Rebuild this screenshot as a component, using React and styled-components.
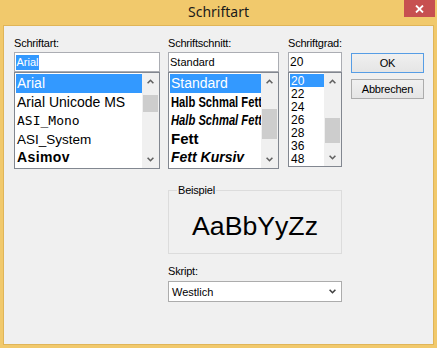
import React from 'react';
import styled, { createGlobalStyle } from 'styled-components';

const GlobalStyle = createGlobalStyle`
  html, body { margin: 0; padding: 0; }
  body { width: 437px; height: 348px; overflow: hidden; background: #f1c96c; font-family: "Liberation Sans", Arial, sans-serif; }
  * { box-sizing: border-box; }
`;

const Window = styled.div`
  width: 437px;
  height: 348px;
  background: #f1c96c;
  display: flex;
  flex-direction: column;
  padding: 0 3px 3px;
`;

const TitleBar = styled.div`
  flex: none;
  height: 25px;
  margin: 0 -3px;
  display: grid;
  grid-template-columns: 1fr auto 1fr;
  align-items: start;
`;

const Title = styled.div`
  grid-column: 2;
  padding-top: 2px;
  font-family: "Noto Sans", "Open Sans", sans-serif;
  font-size: 14px;
  line-height: 19px;
  color: #1a1a1a;
`;

const CloseButton = styled.div`
  grid-column: 3;
  justify-self: end;
  width: 31px;
  height: 17px;
  margin-right: 2px;
  background: #c75050;
  display: flex;
  align-items: center;
  justify-content: center;
`;

const Client = styled.div`
  flex: 1;
  background: #f0f0f0;
  border: 1px solid #e0b558;
  padding: 11px 0 0 10px;
`;

const Body = styled.div`
  display: grid;
  grid-template-columns: 154px 120px 63px 73px;
  align-items: start;
`;

const Column = styled.div`
  width: ${(p) => p.$w}px;
  display: flex;
  flex-direction: column;
`;

const Label = styled.div`
  font-size: 11px;
  line-height: 13px;
  height: 15px;
  letter-spacing: -0.2px;
  color: #000;
  white-space: nowrap;
`;

const Edit = styled.div`
  height: 20px;
  border: 1px solid #abadb3;
  background: #fff;
  font-size: ${(p) => p.$size || 11}px;
  line-height: 18px;
  padding: 0 1px;
  color: #000;
`;

const Selected = styled.span`
  background: #3399ff;
  color: #fff;
  display: inline-block;
  line-height: 15px;
  padding: 0 0.5px;
`;

const ListBox = styled.div`
  height: ${(p) => p.$h}px;
  border: 1px solid #828790;
  background: #fff;
  display: flex;
  overflow: hidden;
`;

const Items = styled.div`
  flex: 1;
  min-width: 0;
  padding: 1px 0 0 1px;
  overflow: hidden;
`;

const Item = styled.div`
  height: ${(p) => p.$h}px;
  line-height: ${(p) => p.$h}px;
  padding-left: 1px;
  white-space: nowrap;
  overflow: hidden;
  font-family: "Liberation Sans", Arial, sans-serif;
  font-size: 14px;
  background: ${(p) => (p.$active ? '#3399ff' : 'transparent')};
  color: ${(p) => (p.$active ? '#fff' : '#000')};
`;

const ItemText = styled.span`
  display: inline-block;
  font-family: ${(p) => p.$family || 'inherit'};
  font-size: ${(p) => p.$size || 14}px;
  font-weight: ${(p) => (p.$bold ? 700 : 400)};
  font-style: ${(p) => (p.$italic ? 'italic' : 'normal')};
  letter-spacing: ${(p) => p.$ls || 0}px;
  transform: scaleX(${(p) => p.$scale || 1});
  transform-origin: left center;
`;

const Scrollbar = styled.div`
  width: 17px;
  flex: none;
  display: flex;
  flex-direction: column;
  background: #f0f0f0;
`;

const ScrollButton = styled.div`
  height: 17px;
  flex: none;
  display: flex;
  align-items: center;
  justify-content: center;
`;

const Track = styled.div`
  flex: 1;
`;

const Thumb = styled.div`
  margin: ${(p) => p.$top}px 1px 0;
  height: ${(p) => p.$h}px;
  background: #cdcdcd;
`;

const ButtonColumn = styled.div`
  margin-top: 16px;
  display: flex;
  flex-direction: column;
  gap: 6px;
`;

const Button = styled.button`
  width: 73px;
  height: 20px;
  padding: 0;
  font-family: "Liberation Sans", Arial, sans-serif;
  font-size: 11px;
  letter-spacing: -0.2px;
  color: #000;
  border: 1px solid ${(p) => (p.$default ? '#569de5' : '#acacac')};
  background: linear-gradient(#f0f0f0, #e5e5e5);
`;

const Lower = styled.div`
  grid-column: 2 / 4;
  width: 174px;
  display: flex;
  flex-direction: column;
`;

const SampleBox = styled.fieldset`
  margin: 15px 0 0;
  padding: 14px 0 12px;
  border: 1px solid #dcdcdc;
  min-width: 0;
`;

const Legend = styled.legend`
  margin-left: 8px;
  padding: 0 1px;
  font-size: 11px;
  line-height: 13px;
  letter-spacing: -0.2px;
  color: #000;
  text-align: left;
`;

const SampleText = styled.div`
  font-size: 26.67px;
  line-height: 30px;
  color: #000;
  text-align: center;
`;

const ScriptLabel = styled(Label)`
  margin-top: 11px;
`;

const Select = styled.div`
  margin-top: 1px;
  height: 21px;
  border: 1px solid #acacac;
  background: #fff;
  display: flex;
  align-items: center;
  justify-content: space-between;
  padding: 0 5px 0 3px;
  font-size: 11px;
  color: #000;
`;

const Chevron = ({ down, color = '#606060' }) => (
  <svg width="7" height="5" viewBox="0 0 7 5">
    <path
      d={down ? 'M0.6 0.8 L3.5 3.7 L6.4 0.8' : 'M0.6 4.2 L3.5 1.3 L6.4 4.2'}
      fill="none"
      stroke={color}
      strokeWidth="1.6"
    />
  </svg>
);

const ScrollList = ({ height, thumbTop, thumbHeight, children }) => (
  <ListBox $h={height}>
    <Items>{children}</Items>
    <Scrollbar>
      <ScrollButton>
        <Chevron />
      </ScrollButton>
      <Track>
        <Thumb $top={thumbTop} $h={thumbHeight} />
      </Track>
      <ScrollButton>
        <Chevron down />
      </ScrollButton>
    </Scrollbar>
  </ListBox>
);

const fonts = [
  { name: 'Arial' },
  { name: 'Arial Unicode MS' },
  { name: 'ASI_Mono', family: '"DejaVu Sans Mono", monospace', size: 13 },
  { name: 'ASI_System', size: 13.5 },
  { name: 'Asimov', bold: true, ls: 0.4 },
];

const styles = [
  { name: 'Standard' },
  { name: 'Halb Schmal Fett', bold: true, size: 14, scale: 0.8 },
  { name: 'Halb Schmal Fett', bold: true, italic: true, size: 14, scale: 0.8 },
  { name: 'Fett', bold: true, size: 15 },
  { name: 'Fett Kursiv', bold: true, italic: true, size: 14 },
];

const sizes = ['20', '22', '24', '26', '28', '36', '48'];

export default function App() {
  return (
    <>
      <GlobalStyle />
      <Window>
        <TitleBar>
          <Title>Schriftart</Title>
          <CloseButton>
            <svg width="9" height="8" viewBox="0 0 9 8">
              <path d="M1 0.5 L8 7.5 M8 0.5 L1 7.5" stroke="#fff" strokeWidth="1.8" />
            </svg>
          </CloseButton>
        </TitleBar>
        <Client>
          <Body>
            <Column $w={146}>
              <Label>Schriftart:</Label>
              <Edit>
                <Selected>Arial</Selected>
              </Edit>
              <ScrollList height={97} thumbTop={5} thumbHeight={17}>
                {fonts.map((f, i) => (
                  <Item key={f.name} $h={18.5} $active={i === 0}>
                    <ItemText $family={f.family} $size={f.size} $bold={f.bold} $ls={f.ls}>
                      {f.name}
                    </ItemText>
                  </Item>
                ))}
              </ScrollList>
            </Column>
            <Column $w={111}>
              <Label>Schriftschnitt:</Label>
              <Edit>Standard</Edit>
              <ScrollList height={97} thumbTop={19} thumbHeight={30}>
                {styles.map((s, i) => (
                  <Item key={i} $h={18.5} $active={i === 0}>
                    <ItemText
                      $size={s.size}
                      $bold={s.bold}
                      $italic={s.italic}
                      $scale={s.scale}
                    >
                      {s.name}
                    </ItemText>
                  </Item>
                ))}
              </ScrollList>
            </Column>
            <Column $w={54}>
              <Label>Schriftgrad:</Label>
              <Edit $size={12}>20</Edit>
              <ScrollList height={95} thumbTop={28} thumbHeight={25}>
                {sizes.map((s, i) => (
                  <Item key={s} $h={13} $active={i === 0}>
                    <ItemText $size={12}>{s}</ItemText>
                  </Item>
                ))}
              </ScrollList>
            </Column>
            <ButtonColumn>
              <Button $default>OK</Button>
              <Button>Abbrechen</Button>
            </ButtonColumn>
            <Lower>
              <SampleBox>
                <Legend>Beispiel</Legend>
                <SampleText>AaBbYyZz</SampleText>
              </SampleBox>
              <ScriptLabel>Skript:</ScriptLabel>
              <Select>
                <span>Westlich</span>
                <Chevron down color="#404040" />
              </Select>
            </Lower>
          </Body>
        </Client>
      </Window>
    </>
  );
}
